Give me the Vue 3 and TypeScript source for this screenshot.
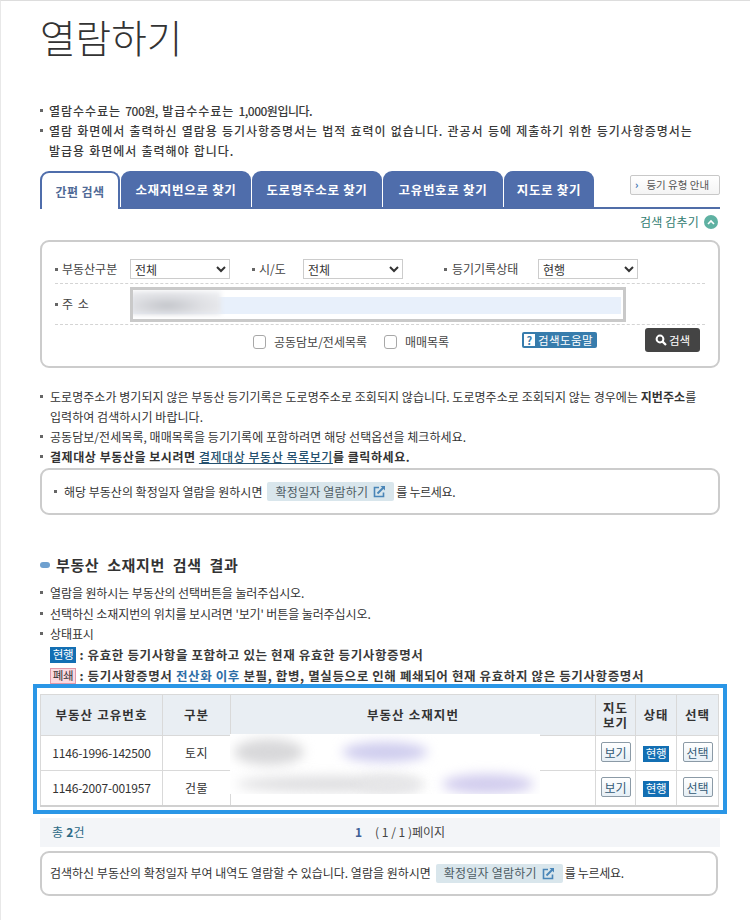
<script setup lang="ts">
const tabs = ['간편 검색', '소재지번으로 찾기', '도로명주소로 찾기', '고유번호로 찾기', '지도로 찾기']

const rows = [
  { id: '1146-1996-142500', kind: '토지' },
  { id: '1146-2007-001957', kind: '건물' }
]
</script>

<template>
  <div class="page">
    <h1 class="title">열람하기</h1>

    <ul class="notes top-notes bold">
      <li>열람수수료는 <span class="num">700원,</span> 발급수수료는 <span class="num">1,000원입니다.</span></li>
      <li>열람 화면에서 출력하신 열람용 등기사항증명서는 법적 효력이 없습니다. 관공서 등에 제출하기 위한 등기사항증명서는 발급용 화면에서 출력해야 합니다.</li>
    </ul>

    <div class="tabbar">
      <div class="tabs">
        <a v-for="(tab, i) in tabs" :key="tab" class="tab" :class="{ active: i === 0 }">{{ tab }}</a>
      </div>
      <button class="type-btn"><i class="caret">›</i>등기 유형 안내</button>
    </div>

    <div class="toggle">
      검색 감추기
      <span class="toggle-dot">
        <svg width="8" height="6" viewBox="0 0 8 6"><path d="M1 5 L4 2 L7 5" fill="none" stroke="#fff" stroke-width="1.6" /></svg>
      </span>
    </div>

    <div class="search-box">
      <div class="search-row first">
        <label class="field f1"><span class="dot-label">부동산구분</span>
          <select class="sel"><option>전체</option></select>
        </label>
        <label class="field f2"><span class="dot-label">시/도</span>
          <select class="sel"><option>전체</option></select>
        </label>
        <label class="field f3"><span class="dot-label">등기기록상태</span>
          <select class="sel"><option>현행</option></select>
        </label>
      </div>
      <div class="search-row addr">
        <span class="dot-label addr-label">주 소</span>
        <div class="addr-input">
          <div class="addr-fill"></div>
          <div class="addr-blur"></div>
        </div>
      </div>
      <div class="search-row last">
        <label class="check c1"><input type="checkbox" />공동담보/전세목록</label>
        <label class="check c2"><input type="checkbox" />매매목록</label>
        <button class="help-btn"><b>?</b>검색도움말</button>
        <button class="search-btn">
          <svg width="12" height="12" viewBox="0 0 12 12"><circle cx="5" cy="5" r="3.4" fill="none" stroke="#fff" stroke-width="2" /><path d="M7.6 7.6 L11 11" stroke="#fff" stroke-width="2.2" /></svg>
          검색
        </button>
      </div>
    </div>

    <ul class="notes mid-notes">
      <li>도로명주소가 병기되지 않은 부동산 등기기록은 도로명주소로 조회되지 않습니다. 도로명주소로 조회되지 않는 경우에는 <b class="tight">지번주소</b>를 입력하여 검색하시기 바랍니다.</li>
      <li>공동담보/전세목록, 매매목록을 등기기록에 포함하려면 해당 선택옵션을 체크하세요.</li>
      <li class="strong-line"><b>결제대상 부동산을 보시려면 </b><a class="link">결제대상 부동산 목록보기</a><b>를 클릭하세요.</b></li>
    </ul>

    <div class="info-box first-info">
      <span class="sq"></span>해당 부동산의 확정일자 열람을 원하시면
      <span class="pill">확정일자 열람하기
        <svg width="13" height="13" viewBox="0 0 13 13"><path d="M6 2.5 H1.5 V11.5 H10.5 V7.5" fill="none" stroke="#4a86b8" stroke-width="1.6" /><path d="M4.5 8.5 L11 2" stroke="#4a86b8" stroke-width="2" /><path d="M7.5 1 H12 V5.5 Z" fill="#4a86b8" /></svg>
      </span>
      <span class="after">를 누르세요.</span>
    </div>

    <h2 class="section"><span class="section-mark"></span>부동산 소재지번 검색 결과</h2>

    <ul class="notes res-notes">
      <li>열람을 원하시는 부동산의 선택버튼을 눌러주십시오.</li>
      <li>선택하신 소재지번의 위치를 보시려면 '보기' 버튼을 눌러주십시오.</li>
      <li>상태표시</li>
    </ul>
    <div class="legend"><span class="badge">현행</span><b> : 유효한 등기사항을 포함하고 있는 현재 유효한 등기사항증명서</b></div>
    <div class="legend"><span class="badge closed">폐쇄</span><b> : 등기사항증명서 <em>전산화 이후</em> 분필, 합병, 멸실등으로 인해 폐쇄되어 현재 유효하지 않은 등기사항증명서</b></div>

    <div class="frame">
      <table class="result">
        <colgroup>
          <col style="width: 122px" /><col style="width: 68px" /><col style="width: 365px" />
          <col style="width: 40px" /><col style="width: 41px" /><col style="width: 42px" />
        </colgroup>
        <thead>
          <tr>
            <th>부동산 고유번호</th><th>구분</th><th>부동산 소재지번</th>
            <th>지도<br />보기</th><th>상태</th><th>선택</th>
          </tr>
        </thead>
        <tbody>
          <tr v-for="row in rows" :key="row.id">
            <td>{{ row.id }}</td>
            <td class="kind">{{ row.kind }}</td>
            <td></td>
            <td><button class="mini">보기</button></td>
            <td><span class="badge">현행</span></td>
            <td><button class="mini">선택</button></td>
          </tr>
        </tbody>
      </table>
      <div class="table-blur">
        <i class="blob g1"></i><i class="blob v1"></i><i class="blob g2"></i><i class="blob g3"></i><i class="blob v2"></i>
      </div>
    </div>

    <div class="pager">
      <span class="total">총 <b>2</b>건</span>
      <span class="page-no"><b>1</b><span class="page-count">( 1 / 1 )페이지</span></span>
    </div>

    <div class="info-box last-info">
      검색하신 부동산의 확정일자 부여 내역도 열람할 수 있습니다. 열람을 원하시면
      <span class="pill">확정일자 열람하기
        <svg width="13" height="13" viewBox="0 0 13 13"><path d="M6 2.5 H1.5 V11.5 H10.5 V7.5" fill="none" stroke="#4a86b8" stroke-width="1.6" /><path d="M4.5 8.5 L11 2" stroke="#4a86b8" stroke-width="2" /><path d="M7.5 1 H12 V5.5 Z" fill="#4a86b8" /></svg>
      </span>
      <span class="after">를 누르세요.</span>
    </div>
  </div>
</template>

<style>
html, body {
  margin: 0;
  background: #fff;
}
</style>

<style scoped>
.page {
  box-sizing: border-box;
  width: 750px;
  height: 920px;
  overflow: hidden;
  padding: 0 30px 0 39px;
  border-top: 1px solid #ddd;
  border-left: 1px solid #e8e8e8;
  font-family: "Noto Sans CJK KR", "Noto Sans", sans-serif;
  font-size: 12px;
  line-height: 20px;
  letter-spacing: -0.05px;
  color: #333;
}
.title {
  margin: 13px 0 0;
  font-size: 38.7px;
  line-height: 44px;
  font-weight: 300;
  letter-spacing: 0;
  color: #333;
}
.notes {
  list-style: none;
  margin: 0;
  padding: 0;
}
.notes li {
  position: relative;
  padding-left: 9px;
}
.notes li::before {
  content: "";
  position: absolute;
  left: 0;
  top: 8px;
  width: 3px;
  height: 3px;
  background: #666;
}
.top-notes {
  width: 655px;
  margin-top: 43px;
  color: #3a3a3a;
  font-weight: 500;
  letter-spacing: 0.96px;
  word-spacing: 0.6px;
}
.num {
  letter-spacing: -0.5px;
}
.tabbar {
  display: flex;
  justify-content: space-between;
  margin-top: 10px;
  height: 38px;
  width: 680px;
  box-sizing: border-box;
  border-bottom: 2px solid #506da8;
}
.tabs {
  display: flex;
  gap: 1px;
}
.tab {
  display: flex;
  align-items: center;
  justify-content: center;
  box-sizing: border-box;
  width: 130px;
  height: 36px;
  padding-top: 1px;
  background: #4f6dab;
  color: #fff;
  font-weight: 700;
  font-size: 12.5px;
  letter-spacing: 0.7px;
  border-radius: 9px 9px 0 0;
}
.tab:nth-child(1) {
  width: 80px;
  height: 38px;
  background: #fff;
  color: #506a96;
  border: 2px solid #4f6dab;
  border-bottom: 0;
  font-size: 12px;
  letter-spacing: 0.4px;
}
.tab:nth-child(4) { width: 120px; }
.tab:nth-child(5) { width: 90px; }
.type-btn {
  box-sizing: border-box;
  width: 90px;
  height: 20px;
  margin-top: 4px;
  padding: 0 0 0 4px;
  text-align: left;
  background: linear-gradient(#fff, #f4f4f4);
  border: 1px solid #c8c8c8;
  border-radius: 2px;
  font: inherit;
  font-size: 10.5px;
  line-height: 18px;
  color: #555;
  letter-spacing: 0;
}
.caret {
  font-style: normal;
  font-weight: 700;
  color: #3a72b0;
  margin-right: 8px;
}
.toggle {
  display: flex;
  justify-content: flex-end;
  align-items: center;
  gap: 5px;
  height: 24px;
  margin-top: 1px;
  padding-right: 2px;
  color: #2f7b70;
  width: 680px;
  box-sizing: border-box;
  letter-spacing: 0.2px;
}
.toggle-dot {
  display: flex;
  align-items: center;
  justify-content: center;
  width: 14px;
  height: 14px;
  border-radius: 50%;
  background: #5fb1a2;
}
.search-box {
  box-sizing: border-box;
  width: 680px;
  height: 128px;
  margin-top: 6px;
  padding: 0 13px;
  border: 2px solid #ccc;
  border-radius: 9px;
}
.search-row {
  position: relative;
  display: flex;
  align-items: center;
}
.search-row.first {
  height: 42px;
  padding-top: 12px;
  box-sizing: border-box;
  border-bottom: 1px dashed #d4d4d4;
}
.search-row.addr {
  height: 40px;
  border-bottom: 1px dashed #d4d4d4;
}
.search-row.last {
  height: 38px;
}
.field {
  display: flex;
  align-items: center;
}
.dot-label {
  position: relative;
  box-sizing: border-box;
  padding-left: 7px;
  color: #444;
  letter-spacing: 0;
}
.dot-label::before {
  content: "";
  position: absolute;
  left: 0;
  top: 9px;
  width: 3px;
  height: 3px;
  background: #666;
}
.f1 .dot-label { width: 75px; }
.f2 { margin-left: 22px; }
.f2 .dot-label { width: 51px; }
.f3 { margin-left: 41px; }
.f3 .dot-label { width: 94px; padding-left: 8px; }
.sel {
  box-sizing: border-box;
  width: 100px;
  height: 20px;
  padding: 0;
  background: #fff;
  border: 1px solid #ccc;
  font: inherit;
  font-size: 12px;
  color: #333;
}
.addr-label {
  width: 75px;
  letter-spacing: 1px;
}
.addr-input {
  position: relative;
  box-sizing: border-box;
  width: 496px;
  height: 35px;
  border: 3px solid #c9c9c9;
  overflow: hidden;
}
.addr-fill {
  position: absolute;
  left: 0;
  right: 2px;
  top: 7px;
  height: 17px;
  background: #e8f0fb;
}
.addr-blur {
  position: absolute;
  left: -2px;
  top: 1px;
  width: 90px;
  height: 24px;
  background: radial-gradient(ellipse at 40% 60%, #c4c6cb 0, #dedfe3 45%, #f2f3f6 100%);
  filter: blur(2px);
}
.check {
  position: absolute;
  display: flex;
  align-items: center;
  color: #444;
  letter-spacing: 0;
}
.check input {
  appearance: none;
  box-sizing: border-box;
  width: 13px;
  height: 14px;
  margin: 0 8px 0 0;
  background: #fff;
  border: 1.5px solid #a8a8a8;
  border-radius: 3px;
}
.c1 { left: 198px; top: 7px; }
.c2 { left: 329px; top: 7px; }
.help-btn {
  position: absolute;
  left: 467px;
  top: 7px;
  display: flex;
  align-items: center;
  width: 75px;
  height: 16px;
  padding: 0 0 0 2px;
  border: 0;
  border-radius: 2px;
  background: #377cac;
  color: #fff;
  font: inherit;
  font-size: 11.5px;
  letter-spacing: 0.4px;
}
.help-btn b {
  width: 11px;
  height: 12px;
  line-height: 12px;
  margin-right: 3px;
  background: #fff;
  color: #377cac;
  font-size: 11px;
}
.search-btn {
  position: absolute;
  left: 590px;
  top: 3px;
  display: flex;
  align-items: center;
  justify-content: center;
  gap: 2px;
  width: 55px;
  height: 24px;
  padding: 0;
  border: 0;
  border-radius: 3px;
  background: #444;
  color: #fff;
  font: inherit;
  font-size: 11.5px;
}
.mid-notes {
  width: 660px;
  margin-top: 19px;
  letter-spacing: 0.05px;
}
.mid-notes li {
  padding-left: 10px;
}
.mid-notes b {
  font-weight: 700;
}
.strong-line {
  letter-spacing: 0.55px;
}
.link {
  color: #24506e;
  font-weight: 500;
  text-decoration: underline;
}
.info-box {
  display: flex;
  align-items: center;
  gap: 4px;
  box-sizing: border-box;
  width: 680px;
  border: 2px solid #ccc;
  border-radius: 9px;
  padding-left: 12px;
  letter-spacing: 0;
}
.first-info {
  height: 47px;
  margin-top: 1px;
}
.sq {
  width: 3px;
  height: 3px;
  margin-right: 3px;
  background: #666;
}
.pill {
  display: inline-flex;
  align-items: center;
  gap: 5px;
  height: 19px;
  padding: 0 8px 0 8px;
  margin-left: 1px;
  background: #d9e6ec;
  border-radius: 2px;
  color: #4d5b63;
  letter-spacing: 0.2px;
}
.after {
  margin-left: -2px;
  letter-spacing: -0.3px;
}
.section {
  display: flex;
  align-items: center;
  margin: 39px 0 0;
  font-size: 15px;
  line-height: 22px;
  font-weight: 700;
  color: #333;
  letter-spacing: 0.6px;
  word-spacing: 4px;
}
.section-mark {
  width: 10px;
  height: 6px;
  margin-right: 6px;
  background: #6fa0cf;
  border-radius: 3px;
}
.res-notes {
  margin-top: 7px;
  letter-spacing: -0.1px;
}
.res-notes li {
  padding-left: 10px;
  line-height: 20.5px;
}
.legend {
  height: 21px;
  margin-left: 10px;
  display: flex;
  align-items: center;
  white-space: pre;
  color: #3a3a3a;
}
.legend b {
  font-size: 12.5px;
  letter-spacing: 0.62px;
}
.legend em {
  font-style: normal;
  color: #2d6ea6;
}
.badge {
  display: inline-block;
  width: 26px;
  height: 16px;
  line-height: 15px;
  text-align: center;
  background: #136fb3;
  color: #fff;
  font-size: 11.5px;
  letter-spacing: -0.3px;
  font-weight: 400;
}
.badge.closed {
  box-sizing: border-box;
  background: #fbd9e0;
  border: 1px solid #e39aa9;
  color: #333;
  line-height: 13px;
}
.frame {
  position: relative;
  box-sizing: border-box;
  width: 694px;
  height: 130px;
  margin: -3px 0 0 -7px;
  padding: 6px 5px 0 3px;
  border: 4px solid #2a96e6;
}
.result {
  table-layout: fixed;
  width: 678px;
  border-collapse: collapse;
  border: 1px solid #d6d6d6;
  border-bottom: 2px solid #d0d0d0;
  letter-spacing: -0.2px;
}
.result th,
.result td {
  border: 1px solid #d9d9d9;
  padding: 0;
  text-align: center;
}
.result th {
  height: 40px;
  background: #e9eef3;
  color: #333;
  font-weight: 700;
  font-size: 12.5px;
  line-height: 15px;
  letter-spacing: 1.1px;
}
.result td {
  height: 34px;
  color: #333;
}
.kind {
  letter-spacing: 0.5px;
}
.mini {
  box-sizing: border-box;
  width: 30px;
  height: 20px;
  padding: 0;
  background: linear-gradient(#fff, #e6eff6);
  border: 1px solid #8b9aa6;
  border-radius: 2px;
  font: inherit;
  color: #335a75;
}
.table-blur {
  position: absolute;
  left: 193px;
  top: 46px;
  width: 310px;
  height: 60px;
  overflow: hidden;
  background: #fff;
}
.blob {
  position: absolute;
  display: block;
  filter: blur(6px);
  border-radius: 50%;
}
.g1 { left: 4px; top: 5px; width: 70px; height: 26px; background: #d8d8da; }
.v1 { left: 112px; top: 8px; width: 86px; height: 20px; background: #cfcdee; }
.g2 { left: 6px; top: 42px; width: 190px; height: 16px; background: #dfdfe1; }
.g3 { left: 130px; top: 42px; width: 60px; height: 18px; background: #e6e6e8; }
.v2 { left: 212px; top: 40px; width: 92px; height: 20px; background: #d2cdee; }
.pager {
  position: relative;
  box-sizing: border-box;
  display: flex;
  align-items: center;
  width: 680px;
  height: 29px;
  margin-top: 4px;
  padding-left: 12px;
  background: #f3f5f8;
}
.total {
  color: #2d6a86;
  letter-spacing: 0.2px;
}
.page-no {
  position: absolute;
  left: 315px;
  color: #444;
  letter-spacing: 0;
}
.page-no b {
  color: #3f5f96;
}
.page-count {
  margin-left: 13px;
}
.last-info {
  width: 678px;
  height: 45px;
  margin-top: 4px;
  padding-left: 8px;
}
</style>
